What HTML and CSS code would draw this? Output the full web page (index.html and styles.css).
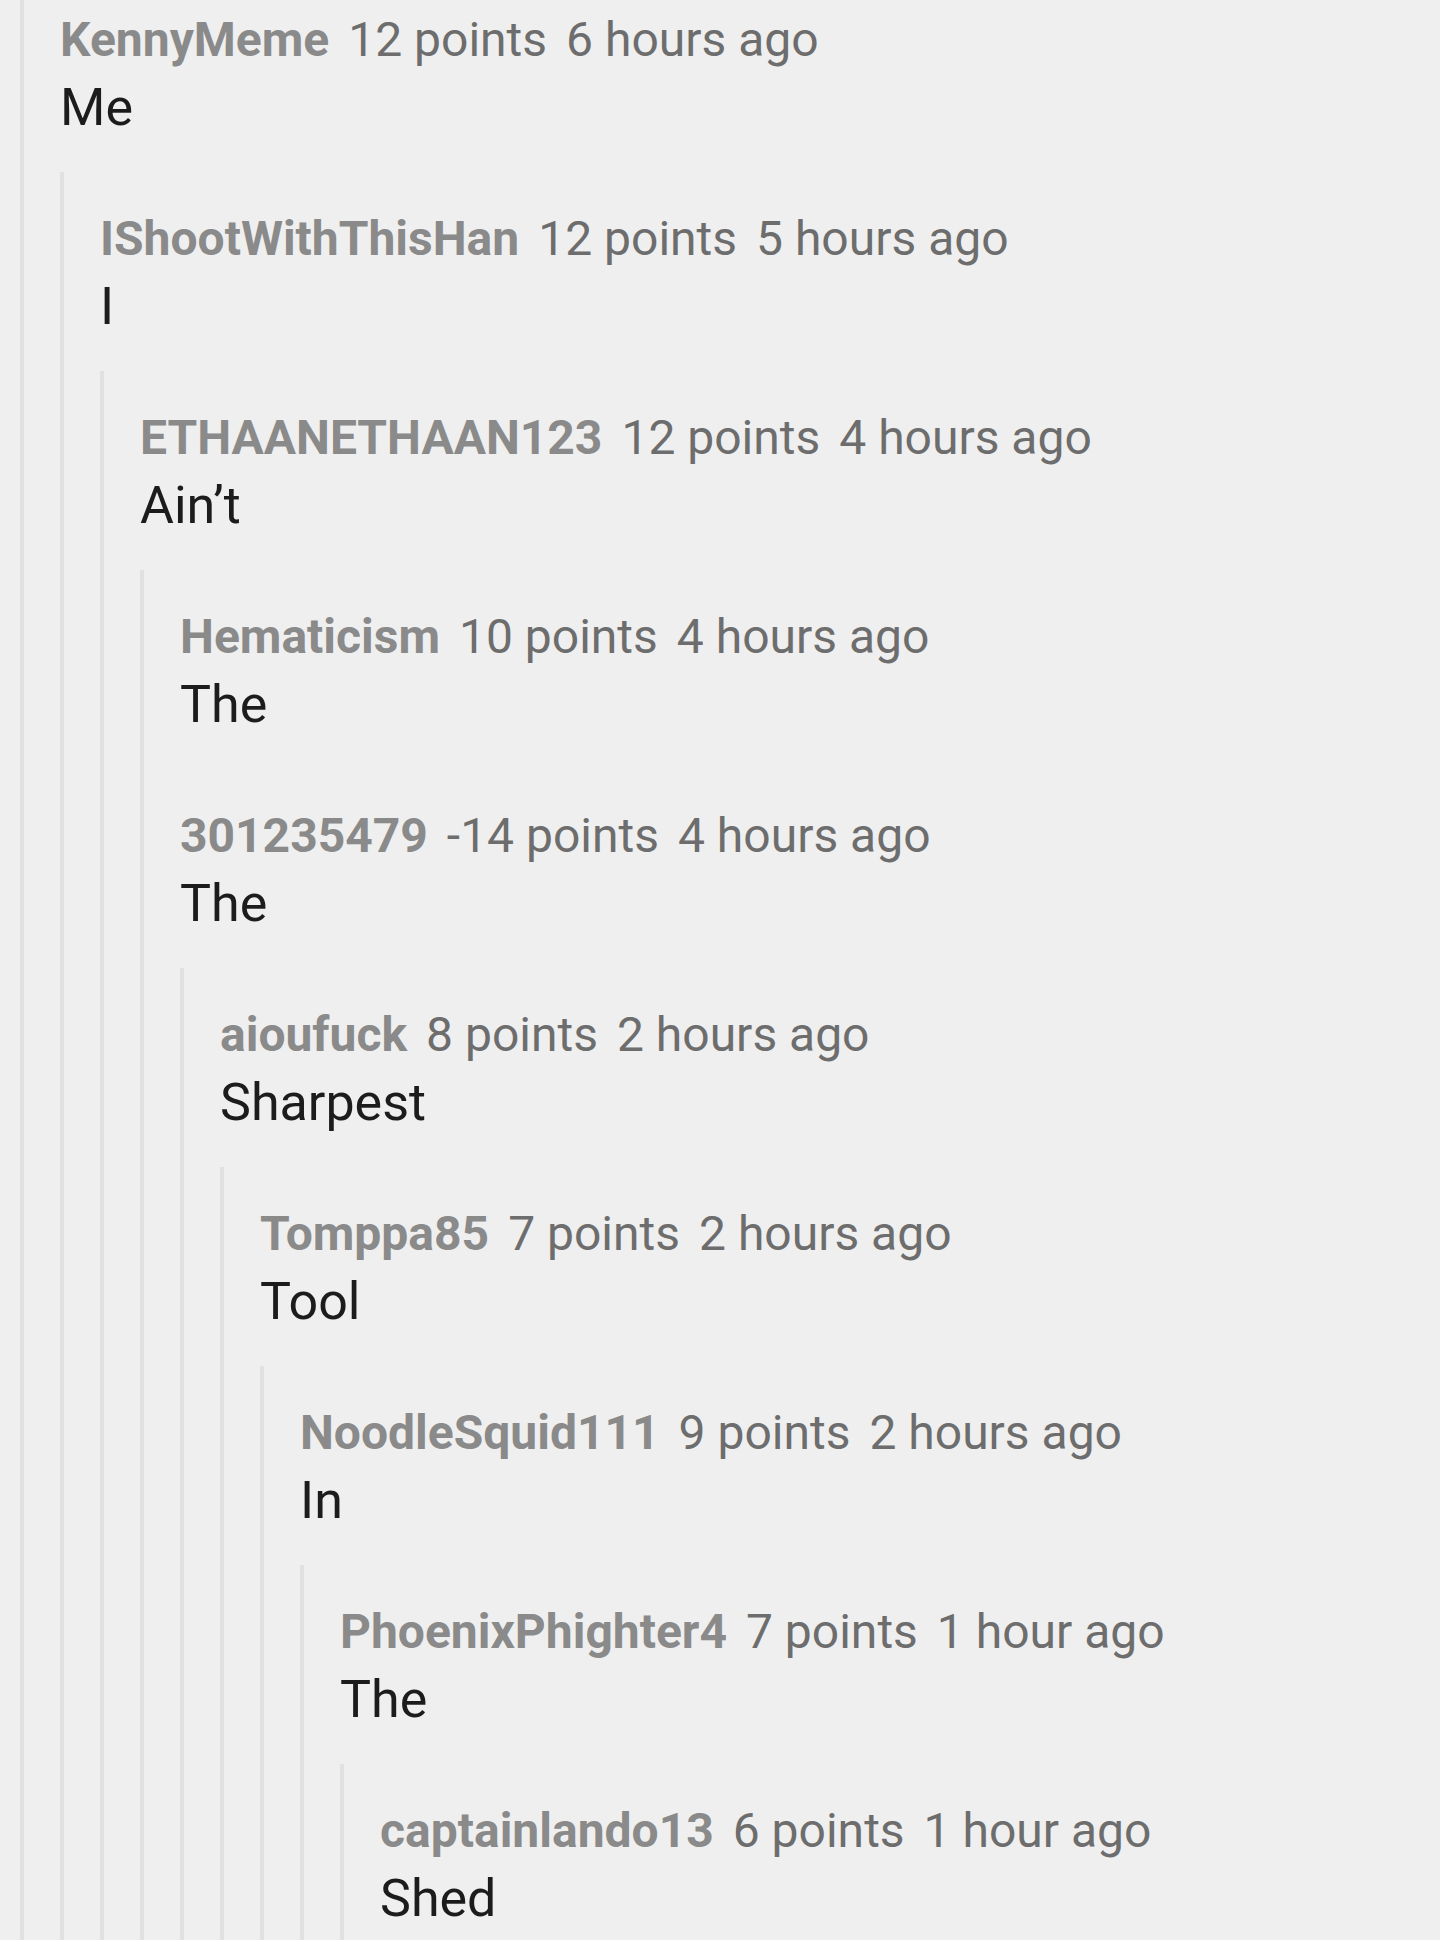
FILE: index.html
```html
<!DOCTYPE html>
<html>
<head>
<meta charset="utf-8">
<link rel="stylesheet" href="styles.css">
</head>
<body>
<div class="thread">
  <div class="comment">
    <div class="main">
      <div class="meta"><span class="user">KennyMeme</span><span class="info">12 points</span><span class="info">6 hours ago</span></div>
      <div class="body">Me</div>
    </div>
    <div class="replies">
      <div class="comment">
        <div class="main">
          <div class="meta"><span class="user">IShootWithThisHan</span><span class="info">12 points</span><span class="info">5 hours ago</span></div>
          <div class="body">I</div>
        </div>
        <div class="replies">
          <div class="comment">
            <div class="main">
              <div class="meta"><span class="user">ETHAANETHAAN123</span><span class="info">12 points</span><span class="info">4 hours ago</span></div>
              <div class="body">Ain’t</div>
            </div>
            <div class="replies">
              <div class="comment">
                <div class="main">
                  <div class="meta"><span class="user">Hematicism</span><span class="info">10 points</span><span class="info">4 hours ago</span></div>
                  <div class="body">The</div>
                </div>
              </div>
              <div class="comment">
                <div class="main">
                  <div class="meta"><span class="user">301235479</span><span class="info">-14 points</span><span class="info">4 hours ago</span></div>
                  <div class="body">The</div>
                </div>
                <div class="replies">
                  <div class="comment">
                    <div class="main">
                      <div class="meta"><span class="user">aioufuck</span><span class="info">8 points</span><span class="info">2 hours ago</span></div>
                      <div class="body">Sharpest</div>
                    </div>
                    <div class="replies">
                      <div class="comment">
                        <div class="main">
                          <div class="meta"><span class="user">Tomppa85</span><span class="info">7 points</span><span class="info">2 hours ago</span></div>
                          <div class="body">Tool</div>
                        </div>
                        <div class="replies">
                          <div class="comment">
                            <div class="main">
                              <div class="meta"><span class="user">NoodleSquid111</span><span class="info">9 points</span><span class="info">2 hours ago</span></div>
                              <div class="body">In</div>
                            </div>
                            <div class="replies">
                              <div class="comment">
                                <div class="main">
                                  <div class="meta"><span class="user">PhoenixPhighter4</span><span class="info">7 points</span><span class="info">1 hour ago</span></div>
                                  <div class="body">The</div>
                                </div>
                                <div class="replies">
                                  <div class="comment">
                                    <div class="main">
                                      <div class="meta"><span class="user">captainlando13</span><span class="info">6 points</span><span class="info">1 hour ago</span></div>
                                      <div class="body">Shed</div>
                                    </div>
                                  </div>
                                </div>
                              </div>
                            </div>
                          </div>
                        </div>
                      </div>
                    </div>
                  </div>
                </div>
              </div>
            </div>
          </div>
        </div>
      </div>
    </div>
  </div>
</div>
</body>
</html>
```

FILE: styles.css
```css
html, body {
  margin: 0;
  padding: 0;
  background: #efefef;
  overflow: hidden;
}

body {
  font-family: Roboto, "Liberation Sans", sans-serif;
  height: 1940px;
}

.thread {
  margin-top: -27px;
  margin-left: 20px;
  border-left: 4px solid #e1e1e1;
  padding-left: 36px;
  padding-bottom: 60px;
}

.replies {
  border-left: 4px solid #e1e1e1;
  padding-left: 36px;
}

.main {
  padding: 33px 0 30px;
}

.meta {
  font-size: 48px;
  line-height: 68px;
  white-space: nowrap;
  display: flex;
}

.user {
  font-weight: 700;
  color: #8a8a8a;
}

.info {
  color: #6d6d6d;
  margin-left: 19px;
}

.body {
  font-size: 52px;
  line-height: 68px;
  color: #1c1c1c;
}
```
